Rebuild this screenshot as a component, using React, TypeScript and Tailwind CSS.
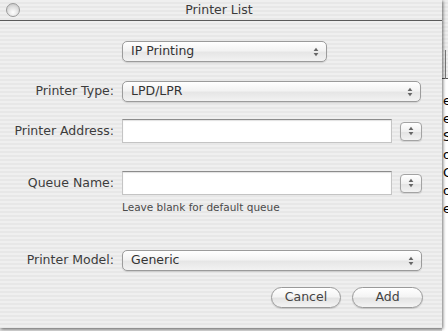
import React from "react";

const stripes =
  "bg-[repeating-linear-gradient(180deg,#efefef_0px,#efefef_2px,#e7e7e7_2px,#e7e7e7_4px)]";

function Arrows({ className = "" }: { className?: string }) {
  return (
    <svg width="6" height="10" viewBox="0 0 6 10" className={className}>
      <path d="M3 0.8 L5.4 4 L0.6 4 Z" fill="#666" />
      <path d="M3 9.2 L5.4 6 L0.6 6 Z" fill="#666" />
    </svg>
  );
}

function Popup({ label, width }: { label: string; width: string }) {
  return (
    <div
      className={`${width} h-[21px] flex items-center justify-between rounded-[5px] border border-[#9b9b9b] bg-[linear-gradient(180deg,#ffffff_0%,#f3f3f3_45%,#e6e6e6_55%,#f2f2f2_100%)] shadow-[0_1px_1px_rgba(0,0,0,0.12)] pl-[8px] pr-[7px]`}
    >
      <span className="text-[12.5px] text-[#333] leading-none">{label}</span>
      <Arrows />
    </div>
  );
}

function Stepper() {
  return (
    <div className="w-[22px] h-[19px] flex items-center justify-center rounded-[4px] border border-[#a3a3a3] bg-[linear-gradient(180deg,#ffffff_0%,#f0f0f0_50%,#e4e4e4_55%,#f2f2f2_100%)] shadow-[0_1px_1px_rgba(0,0,0,0.12)]">
      <Arrows />
    </div>
  );
}

function Field() {
  return (
    <div className="w-[270px] h-[24px] bg-white border border-[#c4c4c4] border-t-[#8c8c8c] shadow-[inset_0_1px_1px_rgba(0,0,0,0.12)]" />
  );
}

function Button({ label, width }: { label: string; width: string }) {
  return (
    <div
      className={`${width} h-[21px] flex items-center justify-center rounded-full border border-[#9a9a9a] bg-[linear-gradient(180deg,#ffffff_0%,#f4f4f4_45%,#e3e3e3_55%,#f4f4f4_100%)] shadow-[0_1px_1px_rgba(0,0,0,0.15)] text-[12.5px] text-[#444] leading-none`}
    >
      {label}
    </div>
  );
}

function Label({ text }: { text: string }) {
  return (
    <div className="w-[115px] text-right text-[12.5px] text-[#3c3c3c] leading-none pr-[1px]">
      {text}
    </div>
  );
}

export default function App() {
  return (
    <div
      className="w-[448px] h-[331px] flex overflow-hidden bg-[#dcdcdc]"
      style={{ fontFamily: '"DejaVu Sans", "Liberation Sans", sans-serif' }}
    >
      {/* dialog window */}
      <div className="relative z-10 w-[442px] h-[328px] flex flex-col shrink-0 shadow-[1px_1px_3px_rgba(0,0,0,0.55)]">
        {/* title bar */}
        <div
          className={`h-[21px] shrink-0 flex items-center relative border-b border-[#5a5a5a] ${stripes}`}
        >
          <div className="ml-[6px] w-[14px] h-[14px] rounded-full border border-[#9a9a9a] bg-[radial-gradient(circle_at_50%_70%,#ffffff_0%,#e2e2e2_50%,#bdbdbd_100%)]" />
          <div className="flex-1 text-center text-[12.5px] text-[#3a3a3a] leading-none pr-[24px]">
            Printer List
          </div>
        </div>
        {/* body */}
        <div className={`flex-1 flex flex-col ${stripes}`}>
          <div className="mt-[20px] flex pl-[122px]">
            <Popup label="IP Printing" width="w-[205px]" />
          </div>

          <div className="mt-[19px] flex items-center gap-[7px]">
            <Label text="Printer Type:" />
            <Popup label="LPD/LPR" width="w-[299px]" />
          </div>

          <div className="mt-[17px] flex items-center gap-[7px]">
            <Label text="Printer Address:" />
            <Field />
            <div className="ml-[1px]">
              <Stepper />
            </div>
          </div>

          <div className="mt-[28px] flex items-center gap-[7px]">
            <Label text="Queue Name:" />
            <Field />
            <div className="ml-[1px]">
              <Stepper />
            </div>
          </div>

          <div className="mt-[6px] pl-[122px] text-[10.5px] text-[#4a4a4a] leading-[13px]">
            Leave blank for default queue
          </div>

          <div className="mt-[36px] flex items-center gap-[7px]">
            <Label text="Printer Model:" />
            <Popup label="Generic" width="w-[300px]" />
          </div>

          <div className="mt-[16px] flex justify-end gap-[11px] pr-[19px]">
            <Button label="Cancel" width="w-[70px]" />
            <Button label="Add" width="w-[71px]" />
          </div>
        </div>
      </div>

      {/* background window peeking on the right */}
      <div className="flex-1 flex flex-col min-w-0">
        <div className={`h-[79px] shrink-0 flex border-b border-[#555] ${stripes}`}>
          <div className="ml-[3px] mt-[50px] h-[29px] border-l border-[#777]" />
        </div>
        <div className="flex-1 bg-white overflow-hidden pt-[13px] pl-[1px]">
          {["ed", "es", "Se", "on", "Co", "on", "er"].map((t, i) => (
            <div
              key={i}
              className="text-[13px] leading-[18px] text-black whitespace-nowrap"
            >
              {t}
            </div>
          ))}
        </div>
      </div>
    </div>
  );
}
